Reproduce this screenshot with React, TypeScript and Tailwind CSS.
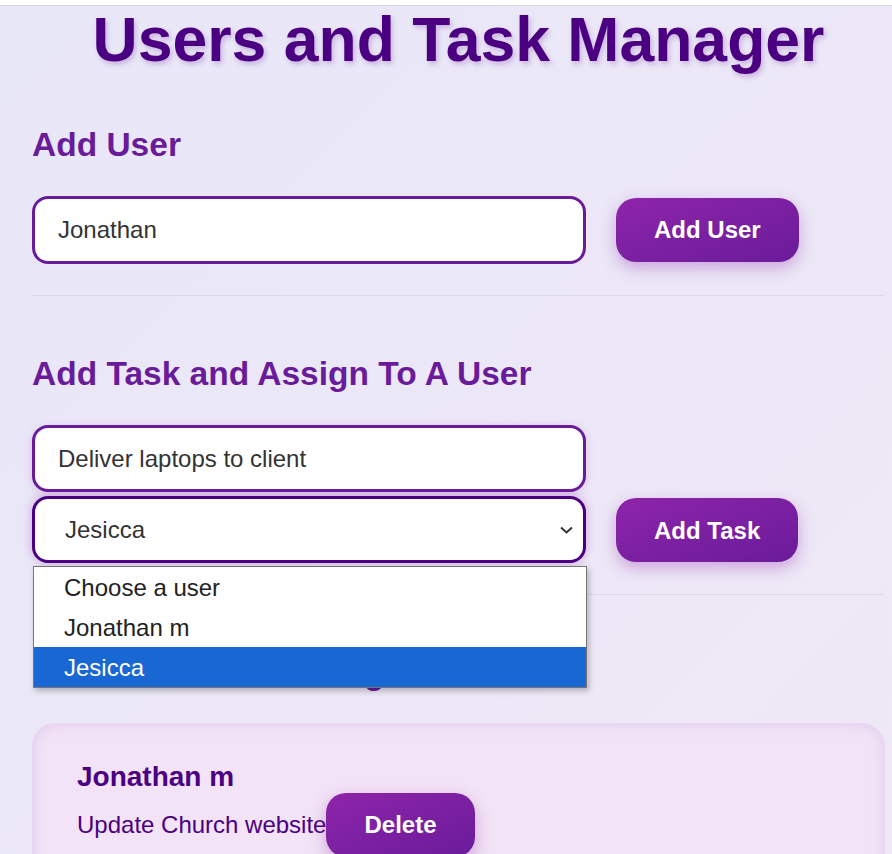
import React, { useState } from 'react';

const users = ['Jonathan m', 'Jesicca'];

function PurpleButton({ children }: { children: React.ReactNode }) {
  return (
    <button
      type="button"
      className="h-[64px] shrink-0 rounded-[20px] bg-linear-to-br from-[#8e24aa] to-[#6a1b9a] px-[38px] text-[24px] font-bold text-white shadow-[0_6px_16px_rgba(142,36,170,0.35)]"
    >
      {children}
    </button>
  );
}

export default function App() {
  const [userName, setUserName] = useState('Jonathan');
  const [taskText, setTaskText] = useState('Deliver laptops to client');
  const [assignee, setAssignee] = useState('Jesicca');

  return (
    <div className="min-h-[854px] bg-white font-['Liberation_Sans',Arial,sans-serif] leading-[1.149]">
      <div className="h-[5px] bg-white" />
      <div className="min-h-[849px] border-t border-[#d6d6dc] bg-linear-to-br from-[#e8e7f8] to-[#efe8f6] pl-[32px] pr-[7px]">
        <h1 className="mt-[2px] text-center text-[62.5px] font-bold leading-none text-[#4b0082] [text-shadow:2px_3px_5px_rgba(106,27,154,0.25)]">
          Users and Task Manager
        </h1>

        {/* add user */}
        <section className="border-b border-[#dcd9e6] pt-[55px] pb-[31px]">
          <h2 className="text-[33.5px] font-bold text-[#6a1b9a]">Add User</h2>
          <div className="mt-[32px] flex items-center gap-[30px]">
            <input
              type="text"
              value={userName}
              onChange={(e) => setUserName(e.target.value)}
              className="h-[68px] w-[554px] rounded-[16px] border-[3px] border-[#6a1b9a] bg-white pl-[23px] text-[24px] text-[#333] outline-none"
            />
            <PurpleButton>Add User</PurpleButton>
          </div>
        </section>

        {/* add task */}
        <section className="border-b border-[#dcd9e6] pt-[59px] pb-[31px]">
          <h2 className="text-[33.5px] font-bold text-[#6a1b9a]">Add Task and Assign To A User</h2>
          <div className="mt-[32px] flex items-end gap-[30px]">
            <div className="flex w-[554px] flex-col gap-[4px]">
              <input
                type="text"
                value={taskText}
                onChange={(e) => setTaskText(e.target.value)}
                className="h-[67px] w-full rounded-[16px] border-[3px] border-[#6a1b9a] bg-white pl-[23px] text-[24px] text-[#333] shadow-[0_2px_8px_rgba(186,104,200,0.3)] outline-none"
              />
              <div className="relative">
                <select
                  value={assignee}
                  onChange={(e) => setAssignee(e.target.value)}
                  className="h-[67px] w-full appearance-none rounded-[16px] border-[3px] border-[#4b0082] bg-white pl-[30px] text-[24px] text-[#333] shadow-[0_0_10px_rgba(142,36,170,0.35)] outline-none"
                >
                  <option value="">Choose a user</option>
                  {users.map((u) => (
                    <option key={u} value={u}>
                      {u}
                    </option>
                  ))}
                </select>
                <svg
                  className="pointer-events-none absolute right-[13px] top-1/2 -translate-y-1/2"
                  width="13"
                  height="8"
                  viewBox="0 0 13 8"
                  fill="none"
                >
                  <path d="M1 1.5l5.5 5 5.5-5" stroke="#333" strokeWidth="2" />
                </svg>

                {/* open option list */}
                <ul className="absolute left-[1px] top-[calc(100%+3px)] z-10 w-full border border-[#767676] bg-white text-[24px] text-[#222] shadow-[2px_3px_6px_rgba(0,0,0,0.25)]">
                  <li className="flex h-[40px] items-center pl-[30px]">Choose a user</li>
                  {users.map((u) => (
                    <li
                      key={u}
                      className={`flex h-[40px] items-center pl-[30px] ${
                        u === assignee ? 'bg-[#1967d2] text-white' : ''
                      }`}
                    >
                      {u}
                    </li>
                  ))}
                </ul>
              </div>
            </div>
            <div className="mb-[1px]">
              <PurpleButton>Add Task</PurpleButton>
            </div>
          </div>
        </section>

        {/* list */}
        <section className="pt-[59px]">
          <h2 className="text-[33.5px] font-bold text-[#6a1b9a]">Users and Their Assigned Tasks</h2>
          <div className="mt-[30px] rounded-[24px] bg-[#f2e3f6] pt-[38px] pb-[30px] pl-[45px] shadow-[inset_0_0_14px_rgba(186,140,220,0.35)]">
            <h3 className="text-[28px] font-bold text-[#4b0082]">Jonathan m</h3>
            <ul>
              <li className="flex items-center text-[24px] text-[#4b0082]">
                <span>Update Church website</span>
                <PurpleButton>Delete</PurpleButton>
              </li>
            </ul>
          </div>
        </section>
      </div>
    </div>
  );
}
